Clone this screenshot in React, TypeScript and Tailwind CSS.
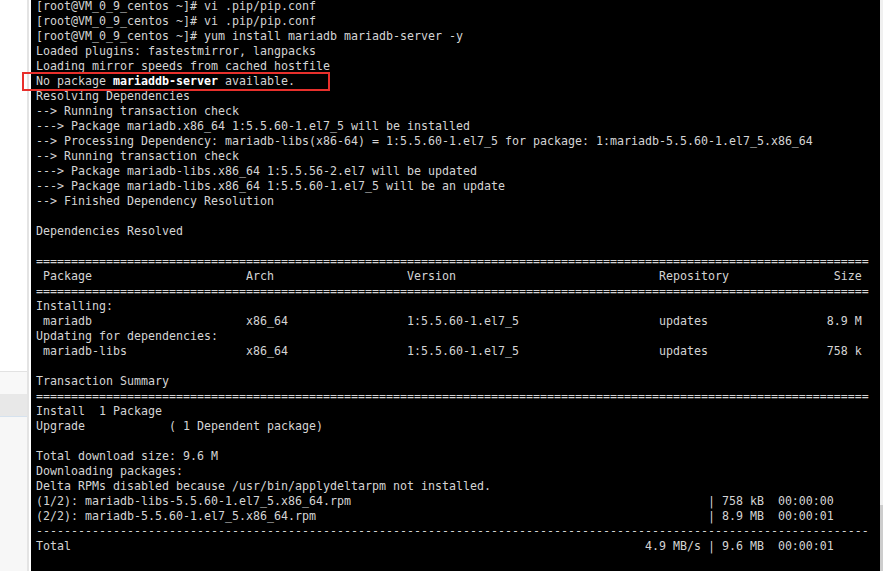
import React from "react";

const W = 119;
const padTo = (s: string, col: number) => (s.length >= col ? s : s + " ".repeat(col - s.length));
const row = (a: string, b: string, c: string, d: string, e: string) =>
  padTo(padTo(padTo(padTo(a, 30) + b, 53) + c, 89) + d, 118 - e.length) + e;

const lines: string[] = [
  "[root@VM_0_9_centos ~]# vi .pip/pip.conf",
  "[root@VM_0_9_centos ~]# vi .pip/pip.conf",
  "[root@VM_0_9_centos ~]# yum install mariadb mariadb-server -y",
  "Loaded plugins: fastestmirror, langpacks",
  "Loading mirror speeds from cached hostfile",
  "__NOPKG__",
  "Resolving Dependencies",
  "--> Running transaction check",
  "---> Package mariadb.x86_64 1:5.5.60-1.el7_5 will be installed",
  "--> Processing Dependency: mariadb-libs(x86-64) = 1:5.5.60-1.el7_5 for package: 1:mariadb-5.5.60-1.el7_5.x86_64",
  "--> Running transaction check",
  "---> Package mariadb-libs.x86_64 1:5.5.56-2.el7 will be updated",
  "---> Package mariadb-libs.x86_64 1:5.5.60-1.el7_5 will be an update",
  "--> Finished Dependency Resolution",
  "",
  "Dependencies Resolved",
  "",
  "=".repeat(W),
  row(" Package", "Arch", "Version", "Repository", "Size"),
  "=".repeat(W),
  "Installing:",
  row(" mariadb", "x86_64", "1:5.5.60-1.el7_5", "updates", "8.9 M"),
  "Updating for dependencies:",
  row(" mariadb-libs", "x86_64", "1:5.5.60-1.el7_5", "updates", "758 k"),
  "",
  "Transaction Summary",
  "=".repeat(W),
  "Install  1 Package",
  "Upgrade            ( 1 Dependent package)",
  "",
  "Total download size: 9.6 M",
  "Downloading packages:",
  "Delta RPMs disabled because /usr/bin/applydeltarpm not installed.",
  padTo("(1/2): mariadb-libs-5.5.60-1.el7_5.x86_64.rpm", 96) + "| 758 kB  00:00:00",
  padTo("(2/2): mariadb-5.5.60-1.el7_5.x86_64.rpm", 96) + "| 8.9 MB  00:00:01",
  "-".repeat(W),
  padTo("Total", 87) + "4.9 MB/s | 9.6 MB  00:00:01",
];

export default function App() {
  return (
    <div className="relative flex w-[883px] h-[571px] overflow-hidden bg-white">
      <div className="flex flex-col w-[29px] h-full border-r-2 border-[#e4e4e4]">
        <div className="h-[372px] bg-white border-b border-[#e2e2e2]" />
        <div className="h-[22px] bg-[#f8f8f8]" />
        <div className="h-[23px] bg-[#e8e8e8] border-b border-[#d6e2ee]" />
        <div className="flex-1 bg-[#f7f7f7]" />
      </div>
      <div className="w-[2px] bg-white" />
      <div className="flex-1 bg-black pl-[5px] overflow-hidden">
        <div
          className="mt-[-1px] text-[11.63px] leading-[15px] text-[#d4d4d4] whitespace-pre"
          style={{ fontFamily: '"DejaVu Sans Mono", "Liberation Mono", monospace' }}
        >
          {lines.map((l, i) =>
            l === "__NOPKG__" ? (
              <div key={i} className="h-[15px]">
                No package <span className="font-bold text-white">mariaddb-server</span> available.
              </div>
            ) : (
              <div key={i} className="h-[15px]">
                {l}
              </div>
            )
          )}
        </div>
      </div>
      <div className="flex flex-col w-[3px] h-full">
        <div className="h-[505px] bg-[#f0f0f0]" />
        <div className="flex-1 bg-[#cdcdcd]" />
      </div>
      <div className="absolute left-[22px] top-[72px] w-[308px] h-[19px] border-2 border-[#e8302c]" />
    </div>
  );
}
